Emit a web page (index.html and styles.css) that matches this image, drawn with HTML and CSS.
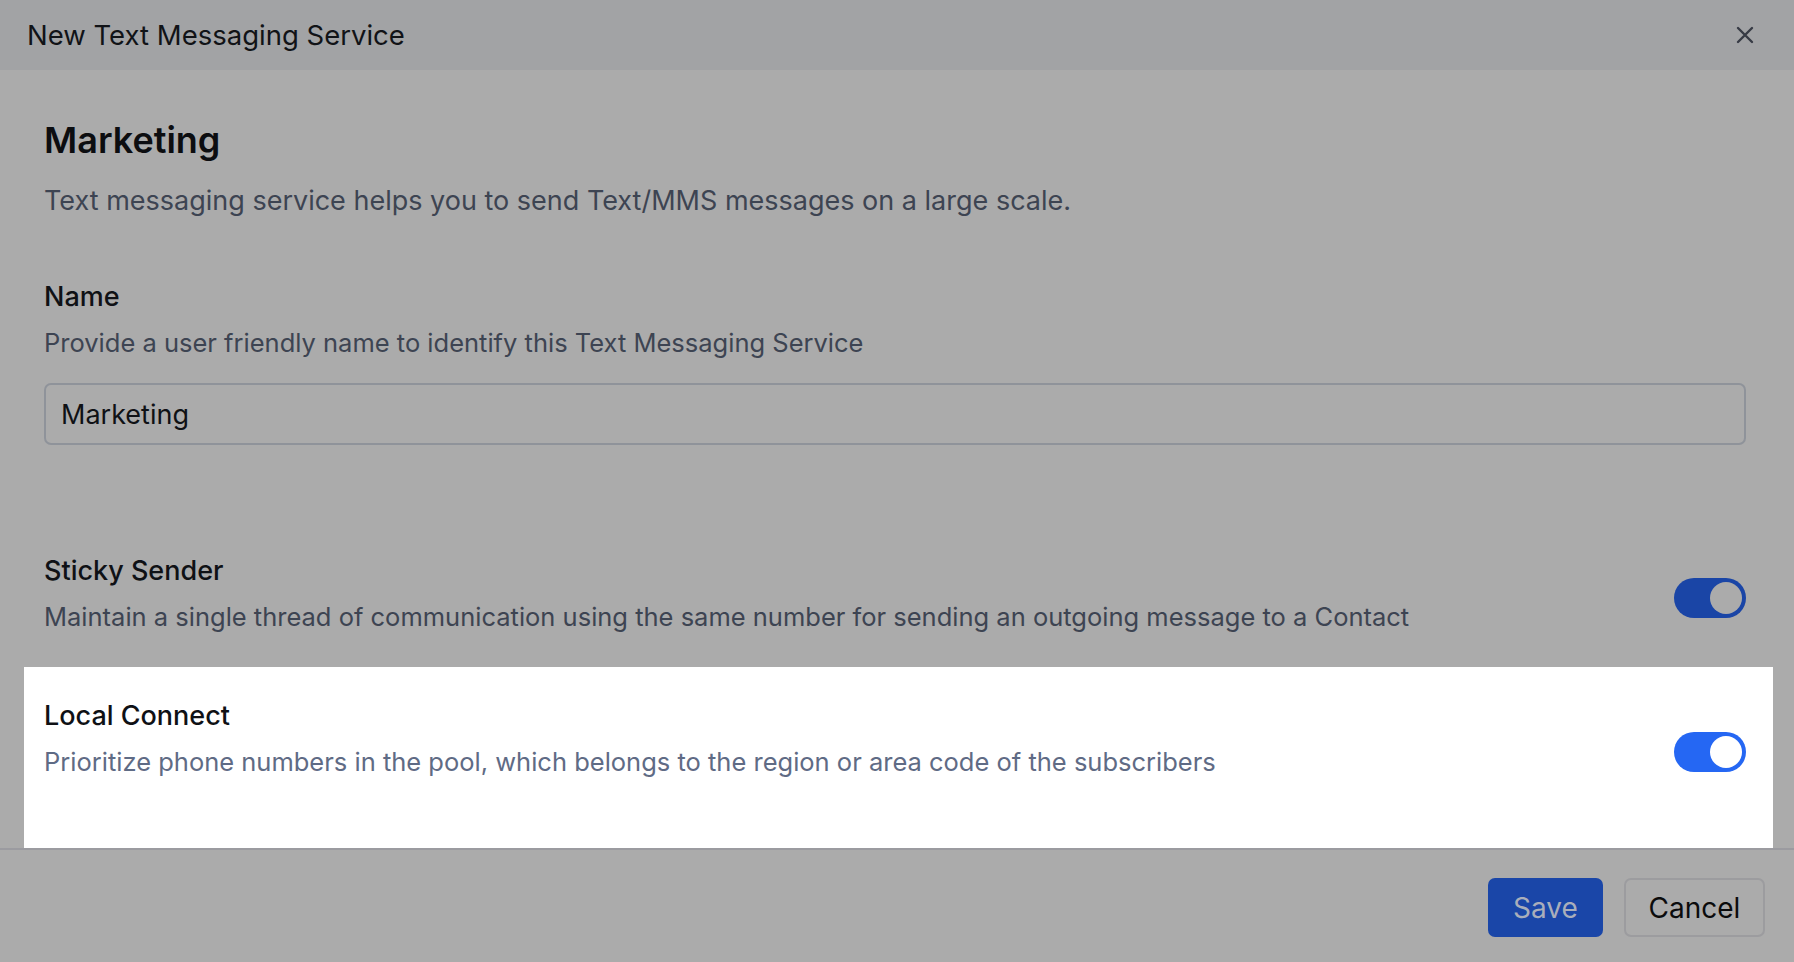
FILE: index.html
```html
<!DOCTYPE html>
<html lang="en">
<head>
<meta charset="utf-8">
<title>New Text Messaging Service</title>
<link rel="stylesheet" href="styles.css">
</head>
<body>
<div class="modal">
  <header class="modal-header">
    <h2 class="modal-title">New Text Messaging Service</h2>
    <button class="close-btn" aria-label="Close">
      <svg width="18" height="18" viewBox="0 0 18 18"><path d="M2 2 L16 16 M16 2 L2 16" stroke="#373b45" stroke-width="2.4" stroke-linecap="round" fill="none"/></svg>
    </button>
  </header>
  <main class="modal-body">
    <h1 class="page-title">Marketing</h1>
    <p class="page-desc">Text messaging service helps you to send Text/MMS messages on a large scale.</p>

    <div class="field">
      <div class="label">Name</div>
      <div class="help">Provide a user friendly name to identify this Text Messaging Service</div>
      <div class="input">Marketing</div>
    </div>

    <div class="setting-row">
      <div class="setting-text">
        <div class="label">Sticky Sender</div>
        <div class="help">Maintain a single thread of communication using the same number for sending an outgoing message to a Contact</div>
      </div>
      <div class="toggle toggle-dim"><span class="knob"></span></div>
    </div>

    <section class="spotlight">
      <div class="setting-row setting-row-lit">
        <div class="setting-text">
          <div class="label">Local Connect</div>
          <div class="help help-lit">Prioritize phone numbers in the pool, which belongs to the region or area code of the subscribers</div>
        </div>
        <div class="toggle toggle-lit"><span class="knob"></span></div>
      </div>
    </section>
  </main>
  <footer class="modal-footer">
    <button class="btn btn-primary">Save</button>
    <button class="btn btn-secondary">Cancel</button>
  </footer>
</div>
</body>
</html>
```

FILE: styles.css
```css
* { box-sizing: border-box; }
html, body { margin: 0; padding: 0; }
body {
  background: #ababab;
  font-family: Inter, "Noto Sans", "Liberation Sans", sans-serif;
  color: #0f1115;
}
.modal {
  width: 1794px;
  height: 962px;
  display: flex;
  flex-direction: column;
  background: #ababab;
  overflow: hidden;
}
.modal-header {
  height: 70px;
  flex: 0 0 70px;
  background: #a2a3a5;
  display: flex;
  align-items: center;
  justify-content: space-between;
  padding: 0 40px 0 27px;
}
.modal-title {
  margin: 0;
  font-size: 27.5px;
  font-weight: 400;
  color: #111317;
  line-height: 32px;
}
.close-btn {
  background: none;
  border: 0;
  padding: 0;
  width: 18px;
  height: 18px;
  display: flex;
}
.modal-body {
  flex: 1;
  padding: 48px 48px 0 44px;
}
.page-title {
  margin: 0;
  font-size: 36px;
  line-height: 44px;
  font-weight: 600;
  color: #0c0d10;
}
.page-desc {
  margin: 23px 0 0;
  font-size: 27px;
  line-height: 32px;
  color: #3d4452;
}
.field { margin-top: 64px; }
.label {
  font-size: 27px;
  line-height: 32px;
  font-weight: 500;
  color: #0f1115;
}
.help {
  margin-top: 14px;
  font-size: 25.5px;
  line-height: 32px;
  color: #3d4452;
}
.help-lit { color: #5f6b85; }
.input {
  margin-top: 24px;
  height: 62px;
  border: 2px solid #8f939a;
  border-radius: 7px;
  display: flex;
  align-items: center;
  padding: 0 15px;
  font-size: 27px;
  color: #0f1115;
}
.setting-row {
  margin-top: 110px;
  display: flex;
  align-items: center;
  justify-content: space-between;
}
.setting-row > .toggle { margin-top: 7px; }
.setting-row-lit {
  margin-top: 0;
  align-items: flex-start;
}
.setting-row-lit > .toggle { margin-top: 32px; }
.toggle {
  width: 72px;
  height: 40px;
  border-radius: 20px;
  padding: 4px;
  display: flex;
  justify-content: flex-end;
  flex: 0 0 auto;
}
.knob {
  width: 32px;
  height: 32px;
  border-radius: 50%;
}
.toggle-dim { background: #1a45a6; }
.toggle-dim .knob { background: #ababab; }
.toggle-lit { background: #2567f3; }
.toggle-lit .knob { background: #ffffff; }
.spotlight {
  margin: 34px -27px 0 -20px;
  padding: 33px 27px 70px 20px;
  background: #ffffff;
}
.modal-footer {
  flex: 0 0 115px;
  border-top: 2px solid #9b9ba0;
  background: #ababab;
  display: flex;
  justify-content: flex-end;
  align-items: flex-start;
  gap: 21px;
  padding: 28px 29px 0 0;
}
.btn {
  height: 59px;
  border-radius: 7px;
  font-family: Inter, "Noto Sans", "Liberation Sans", sans-serif;
  font-size: 28px;
  padding: 0;
  display: flex;
  align-items: center;
  justify-content: center;
}
.btn-primary {
  width: 115px;
  background: #1a46a8;
  border: 0;
  color: #a9aebb;
}
.btn-secondary {
  width: 141px;
  background: #ababab;
  border: 2px solid #9c9c9f;
  color: #0b0b0c;
}
```
